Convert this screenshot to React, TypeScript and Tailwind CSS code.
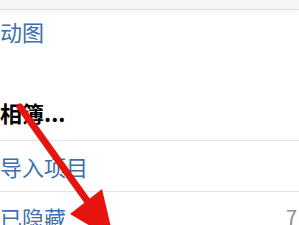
import React from 'react';

const Arrow = () => (
    <svg className="absolute left-0 top-0 pointer-events-none" width="299" height="225" viewBox="0 0 299 225">
        <line x1="20" y1="107" x2="88" y2="202" stroke="#e5140f" strokeWidth="7" strokeLinecap="round" />
        <polygon points="70,214 102,189 114,240" fill="#e5140f" />
    </svg>
);

const Row = ({ label, count }: { label: string; count?: string }) => (
    <div className="flex items-center justify-between h-[50px] pr-[2px]">
        <span className="text-[22px] leading-[22px] text-[#3d6fae]">{label}</span>
        {count && <span className="text-[20px] leading-[22px] text-[#8e8e93]">{count}</span>}
    </div>
);

export default function App() {
    return (
        <div className="relative w-[299px] h-[225px] overflow-hidden bg-white" style={{ fontFamily: '"Noto Sans CJK SC", "Noto Sans", sans-serif' }}>
            <div className="h-[10px] bg-[#f6f6f8] border-b border-[#dcdce0] shadow-[0_2px_4px_rgba(0,0,0,0.04)]" />
            <div className="h-[32px] pt-[10px]">
                <div className="text-[22px] leading-[22px] text-[#3d6fae]">动图</div>
            </div>
            <div className="h-[99px] pt-[59px] border-b border-[#e3e3e6]">
                <div className="text-[22px] leading-[22px] font-semibold text-black">相簿...</div>
            </div>
            <div className="border-b border-[#e3e3e6]">
                <Row label="导入项目" />
            </div>
            <Row label="已隐藏" count="7" />
            <Arrow />
        </div>
    );
}
